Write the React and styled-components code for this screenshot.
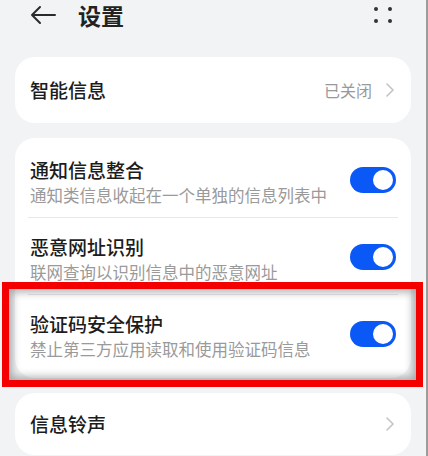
import styled, { createGlobalStyle } from "styled-components";

const GlobalStyle = createGlobalStyle`
  html, body {
    margin: 0;
    padding: 0;
    background: #f1f3f5;
  }
  body {
    font-family: "Noto Sans CJK SC", "Noto Sans", sans-serif;
    color: #191919;
  }
`;

const Screen = styled.div`
  position: relative;
  width: 426px;
  height: 456px;
  overflow: hidden;
  background: #f1f3f5;
  border-right: 2px solid #9c9c9c;
`;

const Header = styled.div`
  display: flex;
  align-items: center;
  height: 30px;
  padding: 0 34px 0 30px;
`;

const Title = styled.h1`
  margin: 0 0 0 22px;
  font-size: 23px;
  font-weight: 600;
  line-height: 30px;
  color: #222;
  flex: 1;
`;

const Dots = styled.div`
  display: grid;
  grid-template-columns: 4px 4px;
  gap: 8px 10px;
`;

const Dot = styled.span`
  width: 4px;
  height: 4px;
  border-radius: 50%;
  background: #333;
`;

const Card = styled.div`
  margin: ${(p) => p.$top}px 15px 0;
  background: #fff;
  border-radius: 20px;
  padding: ${(p) => p.$pad || "0"};
`;

const SimpleRow = styled.div`
  display: flex;
  align-items: center;
  height: ${(p) => p.$h}px;
  padding: 0 17px 0 15px;
`;

const Row = styled.div`
  display: flex;
  align-items: center;
  padding: 16px 15px 10px;
`;

const Divider = styled.div`
  height: 1px;
  margin: 0 13px;
  background: #e8e8e8;
`;

const TextCol = styled.div`
  flex: 1;
`;

const RowTitle = styled.div`
  font-size: 19px;
  font-weight: 500;
  line-height: 26px;
  color: #1c1c1c;
  flex: ${(p) => (p.$grow ? 1 : "none")};
`;

const RowSub = styled.div`
  font-size: 16.5px;
  line-height: 24px;
  color: #9a9a9a;
`;

const Value = styled.span`
  font-size: 16px;
  color: #999;
  margin-right: 14px;
`;

const Toggle = styled.div`
  width: 46px;
  height: 26px;
  border-radius: 13px;
  background: #0a59f7;
  display: flex;
  align-items: center;
  justify-content: flex-end;
  padding: 0 3px;
  box-sizing: border-box;
  margin-top: -4px;
`;

const Knob = styled.span`
  width: 20px;
  height: 20px;
  border-radius: 50%;
  background: #fff;
`;

const Highlight = styled.div`
  position: absolute;
  left: 2px;
  top: 282px;
  width: 421px;
  height: 105px;
  box-sizing: border-box;
  border: 7px solid #f40000;
  box-shadow: inset 0 0 8px 3px rgba(0, 0, 0, 0.32);
  pointer-events: none;
`;

const BackArrow = () => (
  <svg width="26" height="20" viewBox="0 0 26 20" fill="none">
    <path d="M25 10H2M10 2L2 10l8 8" stroke="#2a2a2a" strokeWidth="2" strokeLinecap="round" strokeLinejoin="round" />
  </svg>
);

const Chevron = () => (
  <svg width="8" height="14" viewBox="0 0 8 14" fill="none">
    <path d="M1 1l6 6-6 6" stroke="#c4c4c4" strokeWidth="1.6" strokeLinecap="round" strokeLinejoin="round" />
  </svg>
);

const SwitchRow = ({ title, sub }) => (
  <Row>
    <TextCol>
      <RowTitle>{title}</RowTitle>
      <RowSub>{sub}</RowSub>
    </TextCol>
    <Toggle>
      <Knob />
    </Toggle>
  </Row>
);

const App = () => {
  return (
    <>
      <GlobalStyle />
      <Screen>
        <Header>
          <BackArrow />
          <Title>设置</Title>
          <Dots>
            <Dot />
            <Dot />
            <Dot />
            <Dot />
          </Dots>
        </Header>

        <Card $top={27}>
          <SimpleRow $h={66}>
            <RowTitle $grow>智能信息</RowTitle>
            <Value>已关闭</Value>
            <Chevron />
          </SimpleRow>
        </Card>

        <Card $top={15} $pad="3px 0 7px">
          <SwitchRow title="通知信息整合" sub="通知类信息收起在一个单独的信息列表中" />
          <Divider />
          <SwitchRow title="恶意网址识别" sub="联网查询以识别信息中的恶意网址" />
          <Divider />
          <SwitchRow title="验证码安全保护" sub="禁止第三方应用读取和使用验证码信息" />
        </Card>

        <Card $top={15}>
          <SimpleRow $h={62}>
            <RowTitle $grow>信息铃声</RowTitle>
            <Chevron />
          </SimpleRow>
        </Card>

        <Highlight />
      </Screen>
    </>
  );
};

export default App;
